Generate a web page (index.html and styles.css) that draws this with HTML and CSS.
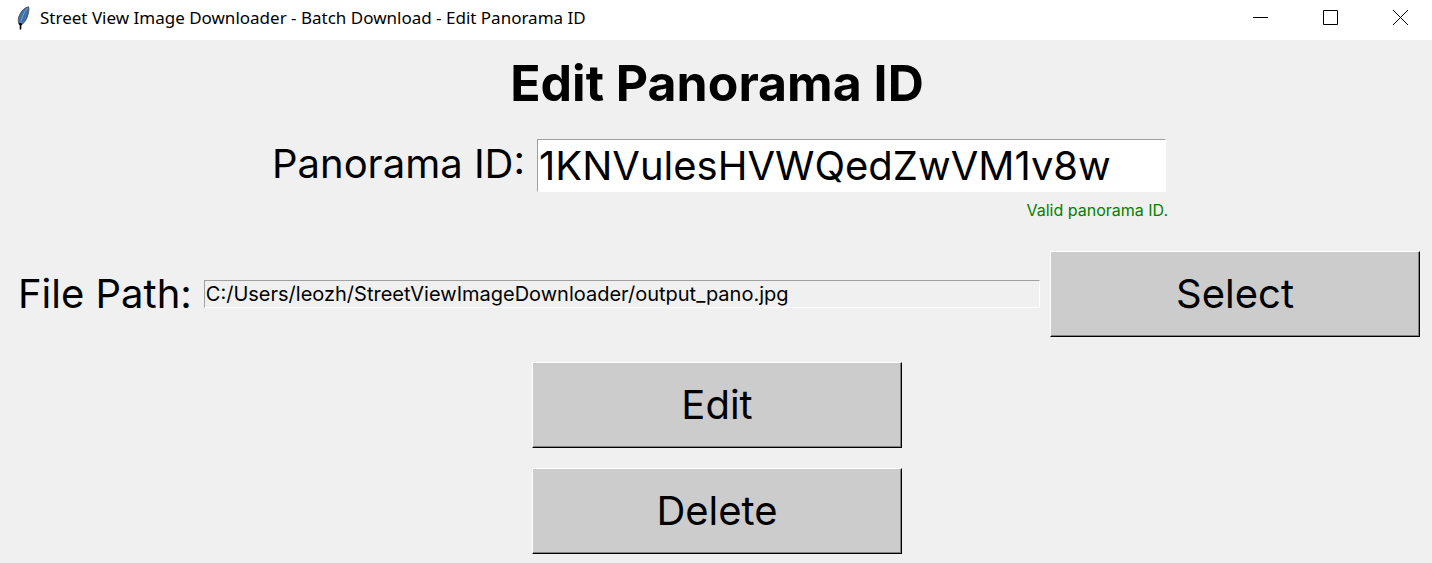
FILE: index.html
```html
<!DOCTYPE html>
<html lang="en">
<head>
<meta charset="utf-8">
<title>Street View Image Downloader - Batch Download - Edit Panorama ID</title>
<link rel="stylesheet" href="styles.css">
</head>
<body>
<header class="titlebar">
  <svg class="app-icon" width="14" height="24" viewBox="0 0 14 24" aria-hidden="true">
    <path d="M12.500 0.800C9 1.500 5.500 4.500 3.800 8.500C2 12 1.800 15 3 18L6 18.500C9 16 11 12.500 12 8.500C13 5 13.200 2.500 12.500 0.800Z" fill="#3b72b0" stroke="#555" stroke-width="1"/>
    <path d="M11.500 2C7.500 7 5.500 12 4.500 18" fill="none" stroke="#8fb4dc" stroke-width="0.700"/>
    <path d="M3 18L6 18.500M4.500 17V23.500" fill="none" stroke="#000" stroke-width="1.600"/>
  </svg>
  <span class="window-title">Street View Image Downloader - Batch Download - Edit Panorama ID</span>
  <div class="window-controls">
    <button class="window-button" type="button" aria-label="Minimize">
      <svg width="15" height="15" viewBox="0 0 15 15"><path d="M0 7.500H15" stroke="#000"/></svg>
    </button>
    <button class="window-button" type="button" aria-label="Maximize">
      <svg width="15" height="15" viewBox="0 0 15 15"><path d="M.5 .5H14.500V14.500H.5Z" fill="none" stroke="#000"/></svg>
    </button>
    <button class="window-button" type="button" aria-label="Close">
      <svg width="15" height="15" viewBox="0 0 15 15"><path d="M0 0L15 15M15 0L0 15" stroke="#000"/></svg>
    </button>
  </div>
</header>
<main class="dialog">
  <h1 class="heading">Edit Panorama ID</h1>
  <form class="form">
    <div class="id-row">
      <label class="label" for="pano-id">Panorama ID:</label>
      <input class="entry" id="pano-id" type="text" value="1KNVulesHVWQedZwVM1v8w" spellcheck="false" aria-describedby="id-status">
      <p class="status" id="id-status">Valid panorama ID.</p>
    </div>
    <div class="path-row">
      <label class="label" for="file-path">File Path:</label>
      <input class="entry entry-readonly" id="file-path" type="text" value="C:/Users/leozh/StreetViewImageDownloader/output_pano.jpg" readonly>
      <button class="button" type="button">Select</button>
    </div>
    <div class="actions">
      <button class="button" type="submit">Edit</button>
      <button class="button" type="button">Delete</button>
    </div>
  </form>
</main>
</body>
</html>
```

FILE: styles.css
```css
* {
  box-sizing: border-box;
}

body {
  margin: 0;
  min-height: 100vh;
  background: #f0f0f0;
  color: #000;
  font-family: Inter, "Liberation Sans", sans-serif;
}

.titlebar {
  display: flex;
  align-items: center;
  height: 40px;
  padding: 0 0 5px 16px;
  background: #fff;
}

.app-icon {
  flex: none;
  margin-right: 10px;
}

.window-title {
  flex: 1;
  font: 17px/24px "Noto Sans", "Open Sans", sans-serif;
  white-space: nowrap;
}

.window-controls {
  display: flex;
  gap: 6px;
}

.window-button {
  display: grid;
  place-items: center;
  width: 64px;
  height: 35px;
  padding: 0;
  border: 0;
  background: transparent;
}

.dialog {
  padding: 12px 12px 8px 14px;
}

.heading {
  margin: 0;
  font-size: 50px;
  line-height: 62px;
  font-weight: 700;
  text-align: center;
}

.id-row {
  display: grid;
  grid-template-columns: auto 629px;
  justify-content: center;
  align-items: start;
  column-gap: 12px;
  margin-top: 25px;
  padding-left: 4px;
}

.label {
  font-size: 40px;
  line-height: 50px;
  white-space: nowrap;
}

.entry {
  min-width: 0;
  padding: 0 1px;
  border: 1px solid;
  border-color: #a0a0a0 #fff #fff #a0a0a0;
  border-radius: 0;
  background: #fff;
  color: #000;
  font: inherit;
  font-size: 40px;
  line-height: 51px;
  height: 53px;
  outline: 0;
}

.status {
  grid-column: 2;
  justify-self: end;
  margin: 8px -2px 0 0;
  color: #008000;
  font-size: 16px;
  line-height: 20px;
}

.path-row {
  display: flex;
  align-items: center;
  margin-top: 31px;
  padding-left: 4px;
}

.entry-readonly {
  flex: 1;
  height: 28px;
  margin: 0 10px 0 12px;
  background: #f0f0f0;
  font-size: 20px;
  line-height: 26px;
}

.button {
  width: 370px;
  height: 86px;
  padding: 0;
  border: 1px solid;
  border-color: #fff #000 #000 #fff;
  border-radius: 0;
  background: #ccc;
  box-shadow: inset -1px -1px #808080;
  color: #000;
  font: inherit;
  font-size: 40px;
  line-height: 50px;
}

.actions {
  display: flex;
  flex-direction: column;
  align-items: center;
  gap: 20px;
  margin-top: 25px;
}
```
